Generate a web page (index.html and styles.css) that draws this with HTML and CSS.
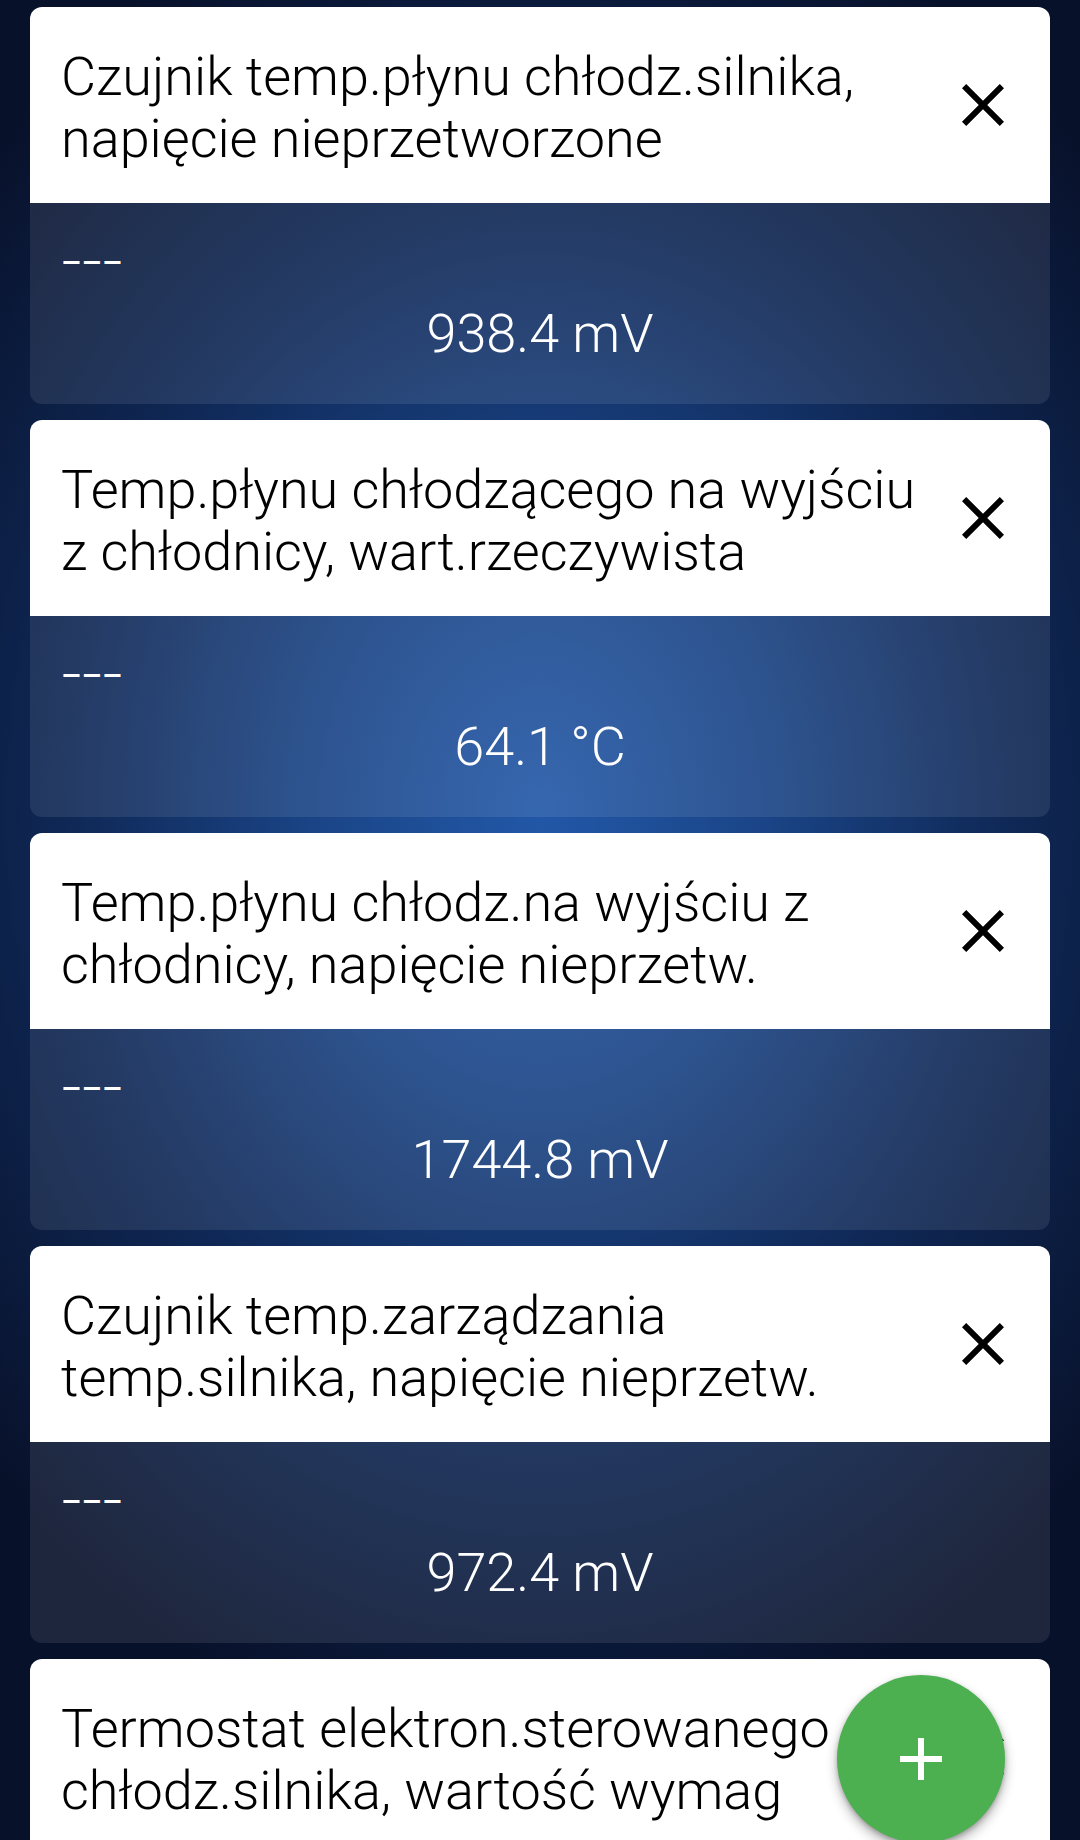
FILE: index.html
```html
<!DOCTYPE html>
<html lang="pl">
<head>
<meta charset="utf-8">
<title>Sensors</title>
<link rel="stylesheet" href="styles.css">
</head>
<body>
<div class="screen">
  <div class="list">
    <div class="card">
      <div class="card-head">
        <div class="title">Czujnik temp.płynu chłodz.silnika, napięcie nieprzetworzone</div>
        <svg class="close" viewBox="0 0 24 24"><path d="M19 6.41L17.59 5 12 10.59 6.41 5 5 6.41 10.59 12 5 17.59 6.41 19 12 13.41 17.59 19 19 17.59 13.41 12z"/></svg>
      </div>
      <div class="card-body">
        <div class="dash">–––</div>
        <div class="value">938.4 mV</div>
      </div>
    </div>
    <div class="card">
      <div class="card-head">
        <div class="title">Temp.płynu chłodzącego na wyjściu z chłodnicy, wart.rzeczywista</div>
        <svg class="close" viewBox="0 0 24 24"><path d="M19 6.41L17.59 5 12 10.59 6.41 5 5 6.41 10.59 12 5 17.59 6.41 19 12 13.41 17.59 19 19 17.59 13.41 12z"/></svg>
      </div>
      <div class="card-body">
        <div class="dash">–––</div>
        <div class="value">64.1 °C</div>
      </div>
    </div>
    <div class="card">
      <div class="card-head">
        <div class="title">Temp.płynu chłodz.na wyjściu z chłodnicy, napięcie nieprzetw.</div>
        <svg class="close" viewBox="0 0 24 24"><path d="M19 6.41L17.59 5 12 10.59 6.41 5 5 6.41 10.59 12 5 17.59 6.41 19 12 13.41 17.59 19 19 17.59 13.41 12z"/></svg>
      </div>
      <div class="card-body">
        <div class="dash">–––</div>
        <div class="value">1744.8 mV</div>
      </div>
    </div>
    <div class="card">
      <div class="card-head">
        <div class="title">Czujnik temp.zarządzania temp.silnika, napięcie nieprzetw.</div>
        <svg class="close" viewBox="0 0 24 24"><path d="M19 6.41L17.59 5 12 10.59 6.41 5 5 6.41 10.59 12 5 17.59 6.41 19 12 13.41 17.59 19 19 17.59 13.41 12z"/></svg>
      </div>
      <div class="card-body">
        <div class="dash">–––</div>
        <div class="value">972.4 mV</div>
      </div>
    </div>
    <div class="card">
      <div class="card-head">
        <div class="title">Termostat elektron.sterowanego chłodz.silnika, wartość wymag</div>
        <svg class="close" viewBox="0 0 24 24"><path d="M19 6.41L17.59 5 12 10.59 6.41 5 5 6.41 10.59 12 5 17.59 6.41 19 12 13.41 17.59 19 19 17.59 13.41 12z"/></svg>
      </div>
    </div>
  </div>
  <div class="fab">
    <svg viewBox="0 0 24 24"><path d="M19 13h-6v6h-2v-6H5v-2h6V5h2v6h6v2z"/></svg>
  </div>
</div>
</body>
</html>
```

FILE: styles.css
```css
html, body {
  margin: 0;
  padding: 0;
  width: 1080px;
  height: 1840px;
  overflow: hidden;
  background: #060c1a;
}

.screen {
  position: relative;
  width: 1080px;
  height: 1840px;
  overflow: hidden;
  font-family: Roboto, "Noto Sans", sans-serif;
  background: radial-gradient(ellipse 70% 52% at 50% 44%, #2258a8 0%, #1a4486 30%, #0f2856 62%, #08112a 100%);
}

.list {
  display: flex;
  flex-direction: column;
  gap: 16px;
  padding: 7px 30px 0 30px;
}

.card {
  border-radius: 12px;
  overflow: hidden;
  flex: none;
}

.card-head {
  background: #ffffff;
  display: flex;
  align-items: center;
  height: 196px;
  box-sizing: border-box;
  padding: 0 31px 0 31px;
}

.title {
  flex: 1;
  font-size: 54px;
  line-height: 62px;
  font-weight: 300;
  color: #000;
  padding-top: 5px;
}

.close {
  width: 72px;
  height: 72px;
  flex: none;
  fill: #000;
  margin-left: 12px;
}

.card-body {
  background: rgba(255, 255, 255, 0.09);
  height: 201px;
  box-sizing: border-box;
  padding: 40px 31px 0 31px;
  color: #fff;
}

.dash {
  font-size: 32px;
  line-height: 40px;
  font-weight: 500;
  letter-spacing: 0;
}

.value {
  margin-top: 20px;
  font-size: 54px;
  line-height: 62px;
  font-weight: 300;
  text-align: center;
}

.fab {
  position: absolute;
  left: 837px;
  top: 1675px;
  width: 168px;
  height: 168px;
  border-radius: 50%;
  background: #4caf50;
  box-shadow: 0 6px 12px rgba(0, 0, 0, 0.3), 0 2px 4px rgba(0, 0, 0, 0.2);
  display: flex;
  align-items: center;
  justify-content: center;
}

.fab svg {
  width: 72px;
  height: 72px;
  fill: #fff;
}
```
